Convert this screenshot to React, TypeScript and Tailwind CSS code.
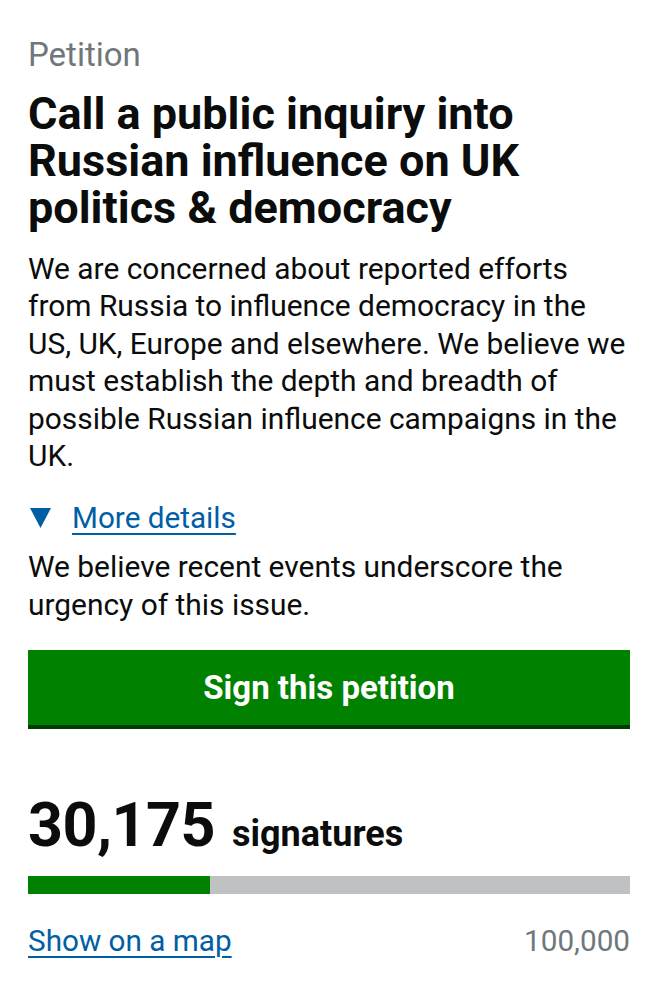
import React from 'react';

const font = { fontFamily: 'Roboto, "Noto Sans", sans-serif' };

// Signature counter with a thin progress bar towards the debate threshold
const SignatureCount: React.FC<{ count: number; target: number }> = ({ count, target }) => {
  const pct = Math.min(100, (count / target) * 100);
  return (
    <div className="mt-[66px]">
      <div className="flex items-baseline gap-[17px] text-[#0b0c0c]">
        <span className="text-[61px] font-bold leading-none tracking-[-0.5px]">{count.toLocaleString('en-GB')}</span>
        <span className="text-[36px] font-bold leading-none">signatures</span>
      </div>
      <div className="mt-[20px] h-[18px] w-full bg-[#bfc1c3]">
        <div className="h-full bg-[#008200]" style={{ width: `${pct}%` }} />
      </div>
      <div className="mt-[27px] flex items-baseline justify-between text-[29.7px] leading-[40px]">
        <a href="#" className="text-[#005ea5] underline decoration-[1.5px] underline-offset-[5px]">
          Show on a map
        </a>
        <span className="text-[#6f777b]">{target.toLocaleString('en-GB')}</span>
      </div>
    </div>
  );
};

export default function App() {
  return (
    <div className="min-h-[1000px] bg-white px-[28px] pt-[34px]" style={font}>
      <p className="text-[33px] leading-[42px] text-[#6f777b]">Petition</p>
      <h1 className="mt-[14px] text-[45px] font-bold leading-[47px] text-[#0b0c0c]">
        Call a public inquiry into Russian influence on UK politics &amp; democracy
      </h1>

      <p className="mt-[19px] text-[29.9px] leading-[37.4px] text-[#0b0c0c]">
        We are concerned about reported efforts from Russia to influence democracy in the US, UK, Europe and
        elsewhere. We believe we must establish the depth and breadth of possible Russian influence campaigns in the
        UK.
      </p>

      <details open className="mt-[24px]">
        <summary className="flex list-none items-center gap-[21px] text-[29.7px] leading-[40px] text-[#005ea5]">
          <svg width="21" height="20" viewBox="0 0 21 20" className="ml-[2px] shrink-0">
            <polygon points="0,0 21,0 10.5,20" fill="#005ea5" />
          </svg>
          <span className="underline decoration-[1.5px] underline-offset-[5px]">More details</span>
        </summary>
        <p className="mt-[10px] text-[29.9px] leading-[37.4px] text-[#0b0c0c]">
          We believe recent events underscore the urgency of this issue.
        </p>
      </details>

      <button
        type="button"
        className="mt-[27px] flex h-[79px] w-full items-center justify-center bg-[#008200] pb-[4px] text-[33px] font-bold text-white shadow-[inset_0_-4px_0_#003d00]"
      >
        Sign this petition
      </button>

      <SignatureCount count={30175} target={100000} />
    </div>
  );
}
